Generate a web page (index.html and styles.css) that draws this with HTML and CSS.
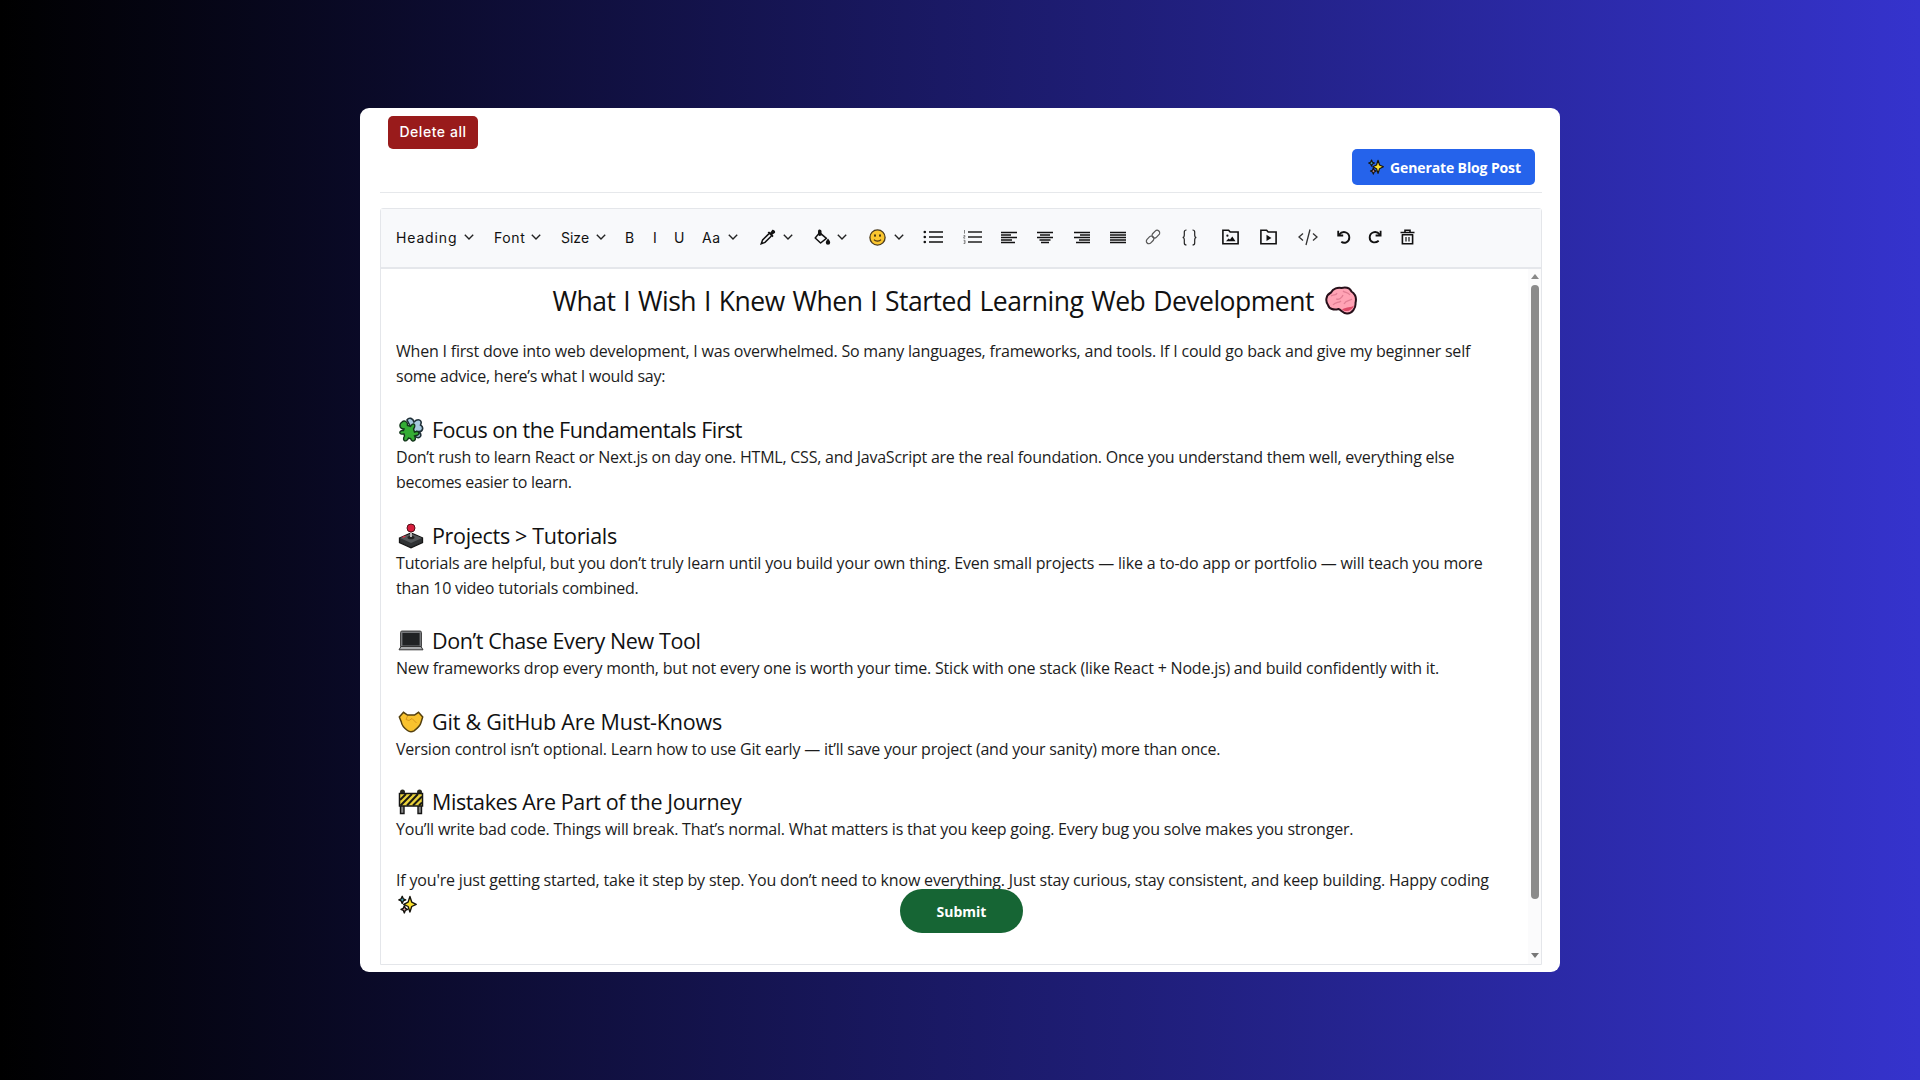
FILE: index.html
```html
<!DOCTYPE html>
<html lang="en">
<head>
<meta charset="utf-8">
<title>Blog Editor</title>
<link rel="stylesheet" href="styles.css">
</head>
<body>
<svg class="defs" aria-hidden="true">
  <symbol id="chev" viewBox="0 0 10 6"><path d="M.8.8 5 4.9 9.2.8" fill="none" stroke="#222" stroke-width="1.4"/></symbol>
  <symbol id="sparkles" viewBox="0 0 18 18">
    <g stroke="#15130c" stroke-width="1.3" stroke-linejoin="round">
      <path d="M4 1.2 5 3.6 7.3 4.6 5 5.6 4 8 3 5.6.8 4.6 3 3.6Z" fill="#49b4cf"/>
      <path d="M6 10.2 7 12.6 9.2 13.6 7 14.5 6 17 5 14.5 2.8 13.6 5 12.6Z" fill="#dd9ba6"/>
      <path d="M11.3 1.4 13 6.7 17.3 8.8 13 10.9 11.3 16.2 9.6 10.9 5.4 8.8 9.6 6.7Z" fill="#fbe02e"/>
    </g>
  </symbol>
</svg>
<main class="card">
  <header class="head">
    <button class="btn-delete"><span>Delete all</span></button>
    <button class="btn-generate"><svg class="spark"><use href="#sparkles"/></svg><span>Generate Blog Post</span></button>
  </header>
  <section class="editor">
    <div class="toolbar">
      <div class="drop w-heading"><span>Heading</span><svg class="chev"><use href="#chev"/></svg></div>
      <div class="drop w-font"><span>Font</span><svg class="chev"><use href="#chev"/></svg></div>
      <div class="drop w-size"><span>Size</span><svg class="chev"><use href="#chev"/></svg></div>
      <span>B</span><span>I</span><span>U</span>
      <div class="drop w-case"><span>Aa</span><svg class="chev"><use href="#chev"/></svg></div>
      <div class="drop w-ico">
        <svg width="16" height="16" viewBox="0 0 16 16"><path d="M9 4.6 2.6 11 1.2 14.8 5 13.4 11.4 7" fill="none" stroke="#111" stroke-width="1.5"/><path d="M7.6 3.6 9 2.4l1.4 1.2 1.6-2.4c1-1.3 4.2.9 2.8 2.8L12.4 5.6l1.2 1.4-1.3 1.3Z" fill="#111"/></svg>
        <svg class="chev"><use href="#chev"/></svg></div>
      <div class="drop w-ico">
        <svg width="17" height="16" viewBox="0 0 17 16"><path d="M5.6 3.6 12.4 9.4 6.6 14 1.2 9Z" fill="none" stroke="#111" stroke-width="1.5" stroke-linejoin="round"/><path d="M4 5.6V2.2C4-.3 7.5.2 7.5 2.4V6.5L5 7Z" fill="#111"/><path d="M14 9.4c1.3 1.6 2.2 2.9 2.2 4.1a2.2 2.2 0 0 1-4.4 0c0-1.2.9-2.5 2.2-4.1Z" fill="#111"/></svg>
        <svg class="chev"><use href="#chev"/></svg></div>
      <div class="drop w-emoji">
        <svg width="17" height="17" viewBox="0 0 17 17"><circle cx="8.5" cy="8.5" r="7.6" fill="#fbc62f" stroke="#4b3b1c" stroke-width="1.3"/><ellipse cx="6" cy="6.6" rx=".9" ry="1.3" fill="#3b2c10"/><ellipse cx="11" cy="6.6" rx=".9" ry="1.3" fill="#3b2c10"/><path d="M5 10.6C6.5 12.6 10.5 12.6 12 10.6" fill="none" stroke="#4b3412" stroke-width="1.2"/></svg>
        <svg class="chev"><use href="#chev"/></svg></div>
      <svg width="21" height="14" viewBox="0 0 21 14"><path d="M6 2h14M6 7h14M6 12h14" stroke="#111" stroke-width="1.4"/><g fill="#111"><circle cx="1.8" cy="2" r="1.3"/><circle cx="1.8" cy="7" r="1.3"/><circle cx="1.8" cy="12" r="1.3"/></g></svg>
      <svg width="19" height="14" viewBox="0 0 19 14"><path d="M5 2h14M5 7h14M5 12h14" stroke="#222" stroke-width="1.4"/><path d="M1.5 0v3.6M.6 5.5h1.3v1.3H.8v1.4h1.4M.6 10.3h1.4v3.2H.6M.9 11.9h1" fill="none" stroke="#666" stroke-width=".8"/></svg>
      <svg width="16" height="13" viewBox="0 0 16 13"><path d="M0 1.5h16M0 4h10M0 6.5h16M0 9h11M0 11.5h14" stroke="#111" stroke-width="1.5"/></svg>
      <svg width="16" height="13" viewBox="0 0 16 13"><path d="M0 1.5h16M3 4h10M0 6.5h16M2.5 9h11M4 11.5h8" stroke="#111" stroke-width="1.5"/></svg>
      <svg width="16" height="13" viewBox="0 0 16 13"><path d="M0 1.5h16M6 4h10M0 6.5h16M5 9h11M2 11.5h14" stroke="#111" stroke-width="1.5"/></svg>
      <svg width="16" height="13" viewBox="0 0 16 13"><path d="M0 1.5h16M0 4h16M0 6.5h16M0 9h16M0 11.5h16" stroke="#111" stroke-width="1.5"/></svg>
      <svg width="16" height="16" viewBox="0 0 16 16"><g fill="none" stroke="#555" stroke-width="1.2"><rect x="-3.9" y="-2.6" width="8.6" height="5.2" rx="2.6" transform="translate(10.6 5.4) rotate(-46)"/><rect x="-4.7" y="-2.6" width="8.6" height="5.2" rx="2.6" transform="translate(5.4 10.6) rotate(-46)"/></g></svg>
      <svg width="15" height="17" viewBox="0 0 15 17"><path d="M4.5 1C2.5 1 2.3 1.6 2.3 3v3C2.3 7.6 2 8.5.6 8.5 2 8.5 2.3 9.4 2.3 11v3c0 1.4.2 2 2.2 2M10.5 1c2 0 2.2.6 2.2 2v3c0 1.6.3 2.5 1.7 2.5-1.4 0-1.7.9-1.7 2.5v3c0 1.4-.2 2-2.2 2" fill="none" stroke="#222" stroke-width="1.2"/></svg>
      <svg width="17" height="16" viewBox="0 0 17 16"><path d="M.9 1.2H6.6L8.2 3H16.1V14.7H.9Z" fill="none" stroke="#111" stroke-width="1.6"/><path d="M4 12.3 6.5 9.5 8 10.6 10.3 7.5 13.5 12.3Z" fill="#111"/><circle cx="5.4" cy="6.7" r="1.1" fill="#111"/></svg>
      <svg width="17" height="16" viewBox="0 0 17 16"><path d="M.9 1.2H6.6L8.2 3H16.1V14.7H.9Z" fill="none" stroke="#111" stroke-width="1.6"/><path d="M6.5 5.7V12L11.5 8.9Z" fill="#111"/></svg>
      <svg width="20" height="17" viewBox="0 0 20 17"><path d="M5 4.5 1 8 5 11.5M15 4.5 19 8 15 11.5M12 .5 8 16" fill="none" stroke="#333" stroke-width="1.3"/></svg>
      <svg width="14" height="14" viewBox="0 0 14 14"><path d="M2 4.8C6-.2 12.3 2.3 12.3 7.5c0 5-5.3 6.3-8 4.2" fill="none" stroke="#111" stroke-width="1.9"/><path d="M1.2.8V5.5H6.2" fill="none" stroke="#111" stroke-width="1.8"/></svg>
      <svg width="14" height="14" viewBox="0 0 14 14"><path d="M12 4.8C8-.2 1.7 2.3 1.7 7.5c0 5 5.3 6.3 9 3.2" fill="none" stroke="#111" stroke-width="1.9"/><path d="M12.6.8V5.5H7.6" fill="none" stroke="#111" stroke-width="1.8"/></svg>
      <svg width="15" height="16" viewBox="0 0 15 16"><path d="M.5 3.5h14M5 3V1.3h5V3M2.4 5.5v9.3h10.2V5.5M1.8 5.8h11.4" fill="none" stroke="#111" stroke-width="1.6"/><path d="M6 8v4.4M9 8v4.4" stroke="#111" stroke-width="1.2"/></svg>
    </div>
    <div class="body">
      <article class="doc">
        <h1><span>What I Wish I Knew When I Started Learning Web Development</span>
          <svg width="32" height="32" viewBox="0 0 32 32"><path d="M3 20C0 16 1 10 6 7.5 8 3.5 13 2 16.5 3 21 2 25 3.5 26.5 6.5 31 9.5 31.5 14 30.5 18 31 23 27 28.5 22.5 28.5 18 29 16.5 25 13.5 24 9 25.5 4 24 3 20Z" fill="#ffa3b5" stroke="#27101a" stroke-width="2"/><path d="M17 24.5C21 27.5 27 26 29 20.5 26 23 22 21.5 17 24.5Z" fill="#dc4a68"/><path d="M6 11c3-2 5 0 6-3M11 14c3 1 6-1 7-4M18 6c2 2 5 1 7 4M8 20c2-3 6-2 8-4M19 19c2-4 6-3 8-5" fill="none" stroke="#e27f95" stroke-width="1.3"/></svg></h1>
        <p>When I first dove into web development, I was overwhelmed. So many languages, frameworks, and tools. If I could go back and give my beginner self<br><span class="snug">some advice, here’s what I would say:</span></p>
        <h2 class="t5"><svg width="26" height="26" viewBox="0 0 26 26"><path d="M9 3C11 0 15 1 16 5 20 1 25 3 22.500 8 26 10 25 15 20.500 14.500 25 18 22 22 18 20Z" fill="#a7c9df" stroke="#203038" stroke-width="1.6"/><path d="M4 5C6.500 2.500 10 5 9.500 8.500L12.500 9.500C14.500 5 19 7 15.500 12L16.500 15C21 13 23 18 18 18.500L16.500 19C19 23 14.500 26.500 12.500 21.500L10.500 21C8.500 26 3.500 24 6.500 19L6 17C.5 18 .5 13 5.500 13.500L6 12C1 12 1 7 4 5Z" fill="#35ad35" stroke="#12351a" stroke-width="1.4"/></svg><span>Focus on the Fundamentals First</span></h2>
        <p><span class="snug">Don’t rush to learn React or Next.js on day one. HTML, CSS, and JavaScript are the real foundation. Once you understand them well, everything else</span><br><span class="tight">becomes easier to learn.</span></p>
        <h2 class="t3"><svg width="26" height="26" viewBox="0 0 26 26"><path d="M1.5 15 13 10 24.5 15V19.5L13 24.8 1.5 19.5Z" fill="#303234" stroke="#151515" stroke-width="1.3"/><path d="M2 15 13 10.5 24 15 13 20Z" fill="#55585b"/><ellipse cx="13" cy="14.5" rx="3.5" ry="1.8" fill="#222"/><path d="M13 14V8" stroke="#bbb" stroke-width="2"/><circle cx="13" cy="5" r="4" fill="#d81e3d" stroke="#541018"/><path d="M4.5 14.3 7.5 13.2" stroke="#d34" stroke-width="1.4"/></svg><span>Projects &gt; Tutorials</span></h2>
        <p><span class="loose">Tutorials are helpful, but you don’t truly learn until you build your own thing. Even small projects — like a to-do app or portfolio — will teach you more</span><br><span class="snug">than 10 video tutorials combined.</span></p>
        <h2 class="t4"><svg width="26" height="26" viewBox="0 0 26 26"><rect x="3.5" y="4" width="19" height="14.5" rx="1" fill="#202224" stroke="#77797c" stroke-width="1.8"/><rect x="2.5" y="3" width="21" height="16.5" rx="1.5" fill="none" stroke="#222" stroke-width=".8"/><path d="M3 18.5H23L25 21.8H1Z" fill="#a9abad" stroke="#333"/></svg><span>Don’t Chase Every New Tool</span></h2>
        <p>New frameworks drop every month, but not every one is worth your time. Stick with one stack (like React + Node.js) and build confidently with it.</p>
        <h2 class="t2"><svg width="26" height="26" viewBox="0 0 26 26"><path d="M1.3 8 5.5 3.3 9.5 6H16.5L20.5 3.3 24.7 8 23 13.5C22 17.5 18.5 20 16 21.8 13.5 23.3 11.5 23 9.5 21.5 6 19 3.8 16.5 3.3 13Z" fill="#f9c22e" stroke="#54400f" stroke-width="1.5"/><path d="M9.5 7 8 10.5 11 11.5 14 9.5 18.5 14" fill="none" stroke="#d8991c"/></svg><span>Git &amp; GitHub Are Must-Knows</span></h2>
        <p>Version control isn’t optional. Learn how to use Git early — it’ll save your project (and your sanity) more than once.</p>
        <h2 class="t4"><svg width="26" height="26" viewBox="0 0 26 26"><path d="M2.5 17V24.5H6V17M20 17V24.5H23.5V17" fill="#888" stroke="#151515" stroke-width="1.4"/><circle cx="4.5" cy="3" r="2.5" fill="#2a2a20"/><circle cx="21.5" cy="3" r="2.5" fill="#2a2a20"/><rect x="1.5" y="4.5" width="23" height="12.5" fill="#ead23b" stroke="#151515" stroke-width="1.5"/><path d="M2 11 8 5M2.5 16.5 14 5M9 16.5 20 5M15 16.5 24 7.5M21 16.5 24 13.5" stroke="#1c1b14" stroke-width="2"/></svg><span>Mistakes Are Part of the Journey</span></h2>
        <p>You’ll write bad code. Things will break. That’s normal. What matters is that you keep going. Every bug you solve makes you stronger.</p>
        <p><span class="loose">If you're just getting started, take it step by step. You don’t need to know everything. Just stay curious, stay consistent, and keep building. Happy coding</span><br><svg class="spark-inline"><use href="#sparkles"/></svg></p>
      </article>
      <div class="scroll"><i class="up"></i><i class="thumb"></i><i class="down"></i></div>
    </div>
  </section>
  <button class="btn-submit">Submit</button>
</main>
</body>
</html>
```
FILE: styles.css
```css
* { box-sizing: border-box; }
body {
  margin: 0;
  height: 1080px;
  padding-top: 108px;
  overflow: hidden;
  background: linear-gradient(90deg, #000 0%, #3533cd 100%);
  font-family: "Open Sans", "Noto Sans", sans-serif;
  color: #111;
}
svg { display: block; flex: none; }
.defs { position: absolute; width: 0; height: 0; }
button { border: 0; padding: 0; color: #fff; }

.card {
  position: relative;
  width: 1200px;
  height: 864px;
  margin: 0 auto;
  padding: 0 18px 7px 20px;
  border-radius: 9px;
  background: #fff;
  display: flex;
  flex-direction: column;
}
.head {
  height: 85px;
  padding: 8px 7px 0 8px;
  border-bottom: 1px solid #e6e8eb;
  display: flex;
  justify-content: space-between;
}
.btn-delete {
  width: 90px;
  height: 33px;
  padding-bottom: 2px;
  border-radius: 5px;
  background: #991b1b;
  font: 500 14px Inter, sans-serif;
  letter-spacing: .55px;
}
.btn-generate {
  width: 183px;
  height: 36px;
  margin-top: 33px;
  border-radius: 5px;
  background: #2563eb;
  font: 700 14px "Open Sans", sans-serif;
  letter-spacing: -.12px;
  display: flex;
  align-items: center;
  padding-left: 16px;
  gap: 6px;
}
.spark { width: 16px; height: 16px; }

.editor {
  margin: 15px 0 0;
  height: 757px;
  border: 1px solid #e4e6ea;
  border-radius: 3px 3px 0 0;
  display: flex;
  flex-direction: column;
}
.toolbar {
  height: 60px;
  padding: 0 0 2px 15px;
  background: #f8f9fb;
  border-bottom: 2px solid #e5e7eb;
  display: grid;
  grid-template-columns: 98px 67px 64px 28px 21px 28px 58px 54px 55px 54px 40px 38px 36px 37px 36px 35px 37px 40px 38px 38px 39px 31px 32px 20px;
  align-items: center;
  font: 400 14px Inter, sans-serif;
  white-space: nowrap;
}
.drop { display: flex; align-items: center; justify-content: space-between; }
.chev { width: 10px; height: 6px; }
.w-heading { width: 78px; letter-spacing: .85px; }
.w-font { width: 47px; letter-spacing: .6px; }
.w-size { width: 45px; }
.w-case { width: 36px; letter-spacing: .6px; }
.w-ico { width: 33px; }
.w-emoji { width: 35px; }

.body { flex: 1; display: flex; justify-content: space-between; min-height: 0; }
.doc { flex: 1; padding: 16px 0 0 15px; white-space: nowrap; }
h1, h2, p { margin: 0; font-weight: 400; }
h1 {
  height: 36px;
  padding-left: 156.5px;
  font-size: 26.5px;
  letter-spacing: -.5px;
  word-spacing: 1.5px;
  line-height: 32px;
  display: flex;
  gap: 11px;
}
p {
  font-size: 16px;
  line-height: 25.3px;
  letter-spacing: -.207px;
  margin-bottom: 25.3px;
  color: #1c1c1c;
}
.loose { letter-spacing: -.18px; }
.snug { letter-spacing: -.233px; }
.tight { letter-spacing: -.3px; }
h1 + p { margin-top: 18px; }
h2 {
  height: 30px;
  font-size: 21.5px;
  line-height: 30px;
  display: flex;
  align-items: center;
  padding-left: 2px;
  gap: 8px;
}
.t2 { letter-spacing: -.21px; }
.t3 { letter-spacing: -.32px; }
.t4 { letter-spacing: -.39px; }
.t5 { letter-spacing: -.5px; }
p + h2 { margin-top: .3px; }
h2 + p { margin-top: -.1px; }
.spark-inline { width: 19px; height: 19px; margin: 2px 0 0 2px; }

.scroll {
  width: 13px;
  background: #fbfbfc;
  display: flex;
  flex-direction: column;
  align-items: center;
}
.up { margin-top: 5px; border: 4px solid transparent; border-top: 0; border-bottom: 5px solid #888; }
.thumb { margin-top: 6px; width: 8px; height: 614px; border-radius: 4px; background: #8b8b8b; }
.down { margin: auto 0 6px; border: 4px solid transparent; border-bottom: 0; border-top: 5px solid #777; }

.btn-submit {
  position: absolute;
  left: 540px;
  top: 781px;
  width: 123px;
  height: 44px;
  border-radius: 22px;
  background: #166534;
  font: 700 14px "Open Sans", sans-serif;
}
```
